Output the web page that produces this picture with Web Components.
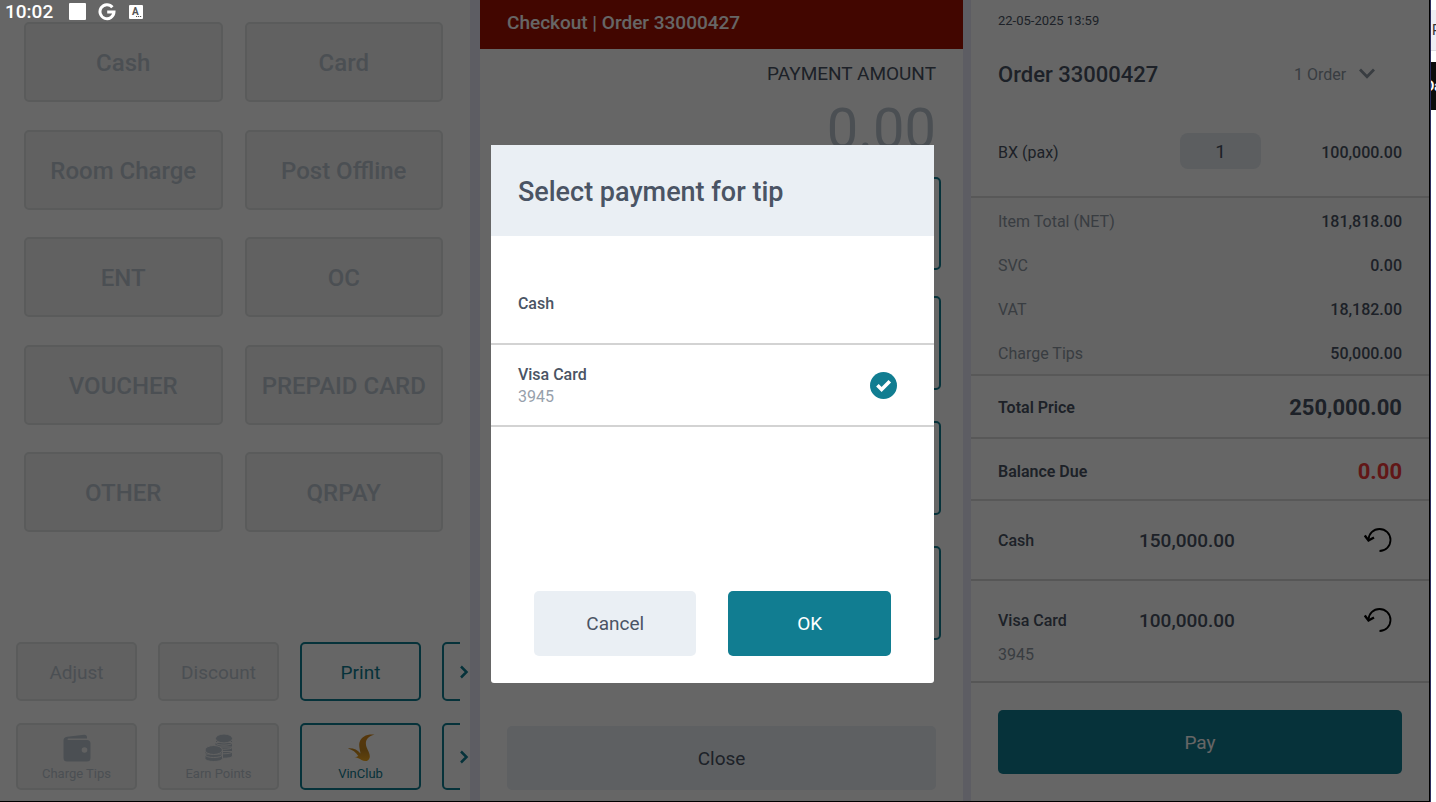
<!DOCTYPE html>
<html lang="en">

    <head>
        <meta charset="utf-8">
        <title>Checkout</title>
        <style>
            html, body {
                height: 100%;
                margin: 0;
            }
            body {
                display: flex;
                overflow: hidden;
                background: #fff;
                font: 16px/20px Roboto, sans-serif;
                color: #4a5464;
                --teal: #117d91;
                --muted: #bbc6d0;
                --grey: #8e98a4;
                --pale: #eaeff4;
                --line: #dcdcdc;
            }
            pos-device { flex: 1; min-width: 0; }
        </style>
    </head>

    <body>
        <pos-device>
            <method-pane></method-pane>
            <checkout-pane></checkout-pane>
            <order-pane></order-pane>
            <tip-dialog slot="over"></tip-dialog>
            <status-bar slot="over"></status-bar>
        </pos-device>
        <side-window></side-window>
    </body>

    <template id="pos-device">
        <style>
            :host {
                display: block;
                position: relative;
                box-sizing: border-box;
                height: 100%;
                overflow: hidden;
                border-right: 1px solid #2b2b5c;
            }
            .screen {
                display: grid;
                grid-template-columns: 470fr 493fr 466fr;
                box-sizing: border-box;
                height: 100%;
                border-right: 1px solid #000;
                border-bottom: 1px solid #000;
            }
        </style>
        <div class="screen"><slot></slot></div>
        <slot name="over"></slot>
    </template>

    <template id="status-bar">
        <style>
            :host {
                position: absolute;
                top: 0;
                left: 0;
                display: flex;
                align-items: center;
                height: 23px;
                padding-left: 5px;
                color: #fff;
                font-size: 19px;
                font-weight: 500;
            }
            .square { width: 17px; height: 17px; margin-left: 16px; border-radius: 1px; background: #fff; }
            svg { margin-left: 12px; }
        </style>
        <span>10:02</span>
        <span class="square"></span>
        <svg width="18" height="18" viewBox="0 0 18 18" fill="none" stroke="#fff" stroke-width="3">
            <path d="M14.4 4.2A7 7 0 1 0 16 9H9.2"/>
        </svg>
        <svg width="16" height="16" viewBox="0 0 16 16">
            <rect x="1" y="1" width="14" height="14" rx="1" fill="#fff"/>
            <text x="4" y="11" font-family="Roboto, sans-serif" font-size="10" font-weight="700" fill="#555">A</text>
            <path d="M8 12.500h1.200M10 12.500h1.200M12 12.500h1.200" stroke="#555"/>
        </svg>
    </template>

    <!-- One button for every look: disabled, outline, primary, soft -->
    <template id="pos-button">
        <style>
            :host { display: block; }
            button {
                display: flex;
                flex-direction: column;
                align-items: center;
                justify-content: center;
                gap: 4px;
                box-sizing: border-box;
                width: 100%;
                height: 100%;
                padding: 2px 0 0;
                border: 0;
                border-radius: 5px;
                background: var(--pale);
                color: inherit;
                font: inherit;
            }
            :host([look="disabled"]) button { border: 2px solid #e1e3e3; background: #f3f3f3; color: var(--muted); }
            :host([look="outline"]) button { border: 2px solid var(--teal); background: none; color: var(--teal); }
            :host([look="primary"]) button { background: var(--teal); color: #fff; }
        </style>
        <button type="button"><slot name="icon"></slot><slot></slot></button>
    </template>

    <template id="method-pane">
        <style>
            :host {
                display: flex;
                flex-direction: column;
                justify-content: space-between;
                box-sizing: border-box;
                min-width: 0;
                padding: 22px 0 11px;
                background: #fff;
            }
            .methods {
                display: grid;
                grid-template-columns: 1fr 1fr;
                grid-auto-rows: 80px;
                align-content: space-between;
                column-gap: 22px;
                height: 510px;
                padding: 0 27px 0 24px;
                font-size: 24px;
                font-weight: 500;
            }
            .actions { display: grid; grid-template-columns: minmax(0, 1fr); row-gap: 22px; }
        </style>
        <div class="methods">
            <pos-button look="disabled">Cash</pos-button>
            <pos-button look="disabled">Card</pos-button>
            <pos-button look="disabled">Room Charge</pos-button>
            <pos-button look="disabled">Post Offline</pos-button>
            <pos-button look="disabled">ENT</pos-button>
            <pos-button look="disabled">OC</pos-button>
            <pos-button look="disabled">VOUCHER</pos-button>
            <pos-button look="disabled">PREPAID CARD</pos-button>
            <pos-button look="disabled">OTHER</pos-button>
            <pos-button look="disabled">QRPAY</pos-button>
        </div>
        <div class="actions">
            <action-strip>
                <pos-button look="disabled">Adjust</pos-button>
                <pos-button look="disabled">Discount</pos-button>
                <pos-button look="outline">Print</pos-button>
                <pos-button look="outline"></pos-button>
            </action-strip>
            <action-strip tall>
                <pos-button look="disabled">
                    <svg slot="icon" width="28" height="28" viewBox="0 0 28 28" fill="currentColor">
                        <path d="M4 2.800 21 .8q3-.3 3 2.500V4.500H5.500q-1 0-1 .8t1 .8H24q3.500 0 3.500 3.500V24q0 3.500-3.500 3.500H4Q.5 27.500.5 24V6.500Q.5 3.200 4 2.800Z"/>
                        <circle cx="21.500" cy="16" r="2.800" fill="#f3f3f3"/>
                    </svg>
                    Charge Tips
                </pos-button>
                <pos-button look="disabled">
                    <svg slot="icon" width="28" height="28" viewBox="0 0 28 28" fill="currentColor" stroke="#f3f3f3">
                        <path d="M10 17.500v4.500c0 3 17.500 3 17.500 0v-4.500zM10 13v4.500c0 3 17.500 3 17.500 0V13zM10 8.500V13c0 3 17.500 3 17.500 0V8.500zM10.500 4v4.500c0 3.500 17 3.500 17 0V4z"/>
                        <ellipse cx="19" cy="4.500" rx="8.500" ry="4.500"/>
                        <path d="M0 20v4.500c0 4 17.500 4 17.500 0V20zM0 16v4.500c0 4 17.500 4 17.500 0V16z"/>
                        <ellipse cx="8.700" cy="16" rx="8.700" ry="4.500"/>
                    </svg>
                    Earn Points
                </pos-button>
                <pos-button look="outline">
                    <svg slot="icon" width="28" height="28" viewBox="0 0 28 28">
                        <defs>
                            <linearGradient id="gold" x1="0" y1="0" x2="0" y2="1">
                                <stop offset="0" stop-color="#d98a1c"/>
                                <stop offset=".6" stop-color="#c98a20"/>
                                <stop offset="1" stop-color="#f4aa1c"/>
                            </linearGradient>
                        </defs>
                        <path fill="url(#gold)" d="M27.500.6C20-.2 14.500 2.500 12.600 8c-1.100 3.600.3 7.500.9 11.500C10.500 16 6.500 14 1 14.400c4.500 1.200 8 3.800 10.300 7.600-1.300.9-2.800 1.200-4.300 1.200 3.500.3 5.500 1.400 7.500 2.900 3.500 2 7.500 1 8.200-2.600.6-3.500-1.700-6.500-3.200-10.500-1.900-5.500.5-10.500 8-12.400Z"/>
                    </svg>
                    VinClub
                </pos-button>
                <pos-button look="outline"></pos-button>
            </action-strip>
        </div>
    </template>

    <template id="action-strip">
        <style>
            :host { display: block; position: relative; padding: 0 10px 0 16px; font-size: 19px; }
            :host([tall]) { font-size: 13px; line-height: 16px; }
            .track {
                display: grid;
                grid-auto-flow: column;
                grid-auto-columns: 121px;
                grid-template-rows: 59px;
                column-gap: 21px;
                overflow: hidden;
            }
            :host([tall]) .track { grid-template-rows: 67px; }
            .next {
                position: absolute;
                top: 0;
                right: 0;
                bottom: 0;
                display: flex;
                align-items: center;
                padding: 0 1px 0 0;
                border: 0;
                background: none;
                color: var(--teal);
            }
        </style>
        <div class="track"><slot></slot></div>
        <button class="next" type="button" aria-label="More">
            <svg width="10" height="14" viewBox="0 0 10 14" fill="none" stroke="currentColor" stroke-width="2.500">
                <path d="m2 1.500 5.500 5.500L2 12.500"/>
            </svg>
        </button>
    </template>

    <template id="checkout-pane">
        <style>
            :host {
                display: flex;
                flex-direction: column;
                box-sizing: border-box;
                min-width: 0;
                padding-bottom: 11px;
                border-left: 10px solid #e9e9f8;
                background: #fff;
                font-size: 19px;
            }
            h1 {
                margin: 0;
                padding: 11px 27px 14px;
                background: #a61000;
                color: #fff;
                font-size: 19px;
                font-weight: 500;
                line-height: 24px;
            }
            .amount { display: grid; justify-items: end; gap: 13px; padding: 14px 27px 0; }
            .amount label { line-height: 21px; }
            output { color: var(--muted); font-size: 56px; line-height: 64px; }
            .first, .keys { padding: 0 22px 0 27px; }
            .first { height: 93px; margin-top: 16px; }
            .keys { display: grid; grid-auto-rows: 94px; gap: 31px; margin-top: 26px; }
            .close { height: 64px; margin: auto 27px 0; }
        </style>
        <h1>Checkout | Order 33000427</h1>
        <div class="amount">
            <label for="amount">PAYMENT AMOUNT</label>
            <output id="amount">0.00</output>
        </div>
        <pos-button class="first" look="outline"></pos-button>
        <div class="keys">
            <pos-button look="outline"></pos-button>
            <pos-button look="outline"></pos-button>
            <pos-button look="outline"></pos-button>
        </div>
        <pos-button class="close">Close</pos-button>
    </template>

    <template id="order-pane">
        <style>
            :host {
                display: flex;
                flex-direction: column;
                min-width: 0;
                border-left: 8px solid #e9e9f8;
                background: #fff;
            }
            time { padding: 11px 27px 0; font-size: 13px; }
            header {
                display: flex;
                align-items: center;
                justify-content: space-between;
                padding: 30px 54px 0 27px;
            }
            h2 { margin: 0; font-size: 22px; font-weight: 500; line-height: 28px; }
            .orders { display: flex; align-items: center; gap: 12px; color: var(--grey); }
            .orders svg { margin-bottom: 4px; }
            select {
                padding: 0;
                border: 0;
                appearance: none;
                background: none;
                color: inherit;
                font: inherit;
            }
            .item {
                display: grid;
                grid-template-columns: 1fr 81px 141px;
                height: 36px;
                padding: 44px 27px 27px;
                border-bottom: 2px solid var(--line);
                line-height: 40px;
            }
            .item b { font-weight: 500; text-align: right; }
            input {
                box-sizing: border-box;
                width: 100%;
                height: 36px;
                padding: 2px 0 0;
                border: 0;
                border-radius: 8px;
                background: #e6eaf0;
                color: inherit;
                font: inherit;
                font-size: 19px;
                text-align: center;
            }
            .totals { background: #fafafa; border-bottom: 2px solid var(--line); }
            .pay { height: 64px; margin: 27px 27px 0; font-size: 19px; }
        </style>
        <time>22-05-2025 13:59</time>
        <header>
            <h2>Order 33000427</h2>
            <div class="orders">
                <select aria-label="Orders"><option>1 Order</option></select>
                <svg width="16" height="11" viewBox="0 0 16 11" fill="none" stroke="currentColor" stroke-width="2.800">
                    <path d="m1 1.500 7 7.200 7-7.200"/>
                </svg>
            </div>
        </header>
        <div class="item">
            <label for="qty">BX (pax)</label>
            <input id="qty" value="1">
            <b>100,000.00</b>
        </div>
        <div class="totals">
            <money-row label="Item Total (NET)">181,818.00</money-row>
            <money-row label="SVC">0.00</money-row>
            <money-row label="VAT">18,182.00</money-row>
            <money-row label="Charge Tips">50,000.00</money-row>
        </div>
        <money-row label="Total Price" strong>250,000.00</money-row>
        <money-row label="Balance Due" strong due>0.00</money-row>
        <paid-row label="Cash">150,000.00</paid-row>
        <paid-row label="Visa Card" note="3945">100,000.00</paid-row>
        <pos-button class="pay" look="primary">Pay</pos-button>
    </template>

    <template id="money-row">
        <style>
            :host {
                display: flex;
                align-items: center;
                justify-content: space-between;
                box-sizing: border-box;
                height: 44px;
                padding: 4px 27px 0;
            }
            .label { color: var(--grey); }
            .value { font-weight: 500; }
            :host([strong]) { height: 63px; padding-top: 2px; border-bottom: 2px solid var(--line); }
            :host([strong]) .label { color: inherit; font-weight: 600; }
            :host([strong]) .value { font-size: 22px; font-weight: 700; }
            :host([due]) { height: 62px; padding-top: 5px; }
            :host([due]) .value { color: #f23b3b; }
        </style>
        <span class="label"></span>
        <span class="value"><slot></slot></span>
    </template>

    <template id="paid-row">
        <style>
            :host {
                display: grid;
                grid-template-columns: 141px 1fr auto;
                align-items: center;
                padding: 25px 37px 23px 27px;
                border-bottom: 2px solid #d6d6d6;
            }
            .label { font-weight: 500; }
            .value { font-size: 19px; font-weight: 500; }
            .note { color: var(--grey); margin-top: 9px; }
            .note:empty { display: none; }
            :host([note]) { padding-bottom: 16px; }
            button { display: flex; padding: 0; border: 0; background: none; color: #000; }
        </style>
        <span class="label"></span>
        <span class="value"><slot></slot></span>
        <button type="button" aria-label="Undo">
            <svg width="28" height="30" viewBox="0 0 28 30" fill="none" stroke="currentColor" stroke-width="1.800">
                <path d="M15.500 25A11 11 0 1 0 4.500 14"/>
                <path d="m.8 9.500 3.700 5 5.500-3" stroke-width="2.400"/>
            </svg>
        </button>
        <span class="note"></span>
    </template>

    <template id="tip-dialog">
        <style>
            :host {
                position: absolute;
                inset: 0;
                display: flex;
                align-items: center;
                justify-content: center;
                padding: 25px 5px 0 0;
                background: rgba(0, 0, 0, .6);
            }
            section {
                display: flex;
                flex-direction: column;
                box-sizing: border-box;
                width: 31.1%;
                min-height: 538px;
                padding-bottom: 27px;
                overflow: hidden;
                border-radius: 0 0 3px 3px;
                background: #fff;
            }
            h2 {
                margin: 0 0 27px;
                padding: 31px 27px 28px;
                background: var(--pale);
                font-size: 27px;
                font-weight: 500;
                line-height: 32px;
            }
            footer {
                display: grid;
                grid-template-columns: 1fr 1fr;
                grid-template-rows: 65px;
                gap: 32px;
                margin: auto 43px 0;
                font-size: 19px;
            }
        </style>
        <section role="dialog" aria-labelledby="title">
            <h2 id="title">Select payment for tip</h2>
            <tip-option label="Cash"></tip-option>
            <tip-option label="Visa Card" note="3945" checked></tip-option>
            <footer>
                <pos-button>Cancel</pos-button>
                <pos-button look="primary">OK</pos-button>
            </footer>
        </section>
    </template>

    <template id="tip-option">
        <style>
            :host { display: block; border-bottom: 2px solid #d3d3d3; }
            label {
                display: flex;
                align-items: center;
                justify-content: space-between;
                box-sizing: border-box;
                min-height: 80px;
                padding: 1px 37px 0 27px;
            }
            .label { display: block; font-weight: 500; line-height: 23px; }
            .note { color: #979fab; line-height: 22px; }
            .mark { display: grid; }
            input, svg { grid-area: 1 / 1; }
            input {
                width: 27px;
                height: 27px;
                margin: 0;
                appearance: none;
                border-radius: 50%;
            }
            input:checked { background: var(--teal); }
            svg { display: none; pointer-events: none; }
            input:checked + svg { display: block; }
        </style>
        <label>
            <span><span class="label"></span><span class="note"></span></span>
            <span class="mark">
                <input type="radio" name="tip">
                <svg width="27" height="27" viewBox="0 0 27 27" fill="none" stroke="#fff" stroke-width="3.600">
                    <path d="m7.400 13.300 4.200 4.200 8.200-8.200"/>
                </svg>
            </span>
        </label>
    </template>

    <!-- Edge of the window that lies behind the device -->
    <template id="side-window">
        <style>
            :host { display: block; width: 5px; overflow: hidden; color: #333; font-size: 14px; white-space: nowrap; }
            .tab { margin-top: 10px; line-height: 40px; padding-left: 1px; background: #eeeef4; border-bottom: 1px solid #dcdce0; }
            .bar { display: flex; margin-top: 11px; line-height: 48px; background: #0c0c0c; color: #fff; font-weight: 700; justify-content: center; }
        </style>
        <div class="tab">P</div>
        <div class="bar">Da</div>
    </template>

    <script>
        //Clones the template of the same id, then copies the given attributes into the spans named after them.
        function define(name, attrs = []) {
            customElements.define(name, class extends HTMLElement {
                constructor() {
                    super();
                    let shadowRoot = this.attachShadow({mode: 'open'});
                    let t = document.getElementById(name);
                    shadowRoot.appendChild(document.importNode(t.content, true));
                }
                connectedCallback() {
                    for (let attr of attrs) {
                        this.shadowRoot.querySelector('.' + attr).textContent = this.getAttribute(attr) || '';
                    }
                    if (this.hasAttribute('checked')) {
                        this.shadowRoot.querySelector('input').checked = true;
                    }
                }
            });
        }

        define('pos-button');
        define('action-strip');
        define('money-row', ['label']);
        define('paid-row', ['label', 'note']);
        define('tip-option', ['label', 'note']);
        define('method-pane');
        define('checkout-pane');
        define('order-pane');
        define('tip-dialog');
        define('status-bar');
        define('side-window');
        define('pos-device');
    </script>

</html>
